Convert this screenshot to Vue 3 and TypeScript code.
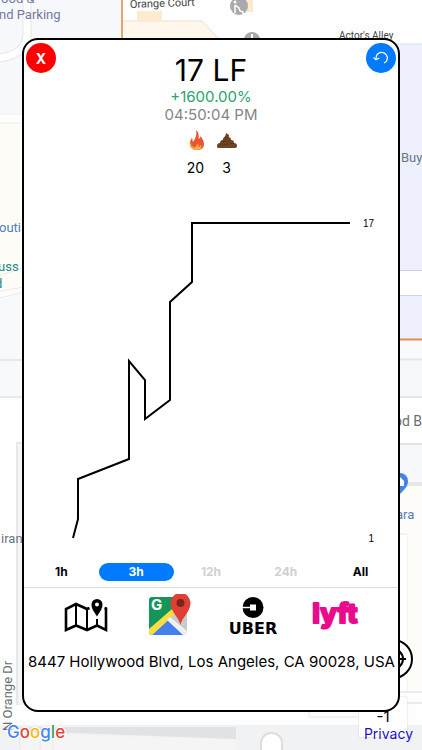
<script setup lang="ts">
import { computed, ref } from 'vue'

interface Range {
  label: string
  enabled: boolean
}

const ranges: Range[] = [
  { label: '1h', enabled: true },
  { label: '3h', enabled: true },
  { label: '12h', enabled: false },
  { label: '24h', enabled: false },
  { label: 'All', enabled: true },
]
const selected = ref('3h')

const samples: [number, number][] = [
  [49, 347], [54, 328], [54, 288], [105, 268], [105, 170], [121, 189],
  [121, 228], [146, 209], [146, 111], [168, 91], [168, 32], [326, 32],
]
const line = computed(() => samples.map((p) => p.join(',')).join(' '))
</script>

<template>
  <div class="screen">
    <svg class="map" viewBox="0 0 422 750" preserveAspectRatio="xMidYMid slice" aria-hidden="true">
      <rect width="422" height="750" fill="#fefefe" />
      <rect width="122" height="113" fill="#f7f8fb" />
      <path d="M27 0V34Q27 54 0 58" fill="none" stroke="#e6e6e6" stroke-width="9" />
      <path d="M27 0V34Q27 54 0 58" fill="none" stroke="#fff" stroke-width="7" />
      <path d="M0 114H22M0 123H22" stroke="#eeede9" />
      <rect y="124" width="24" height="170" fill="#fefcf6" />
      <path d="M0 300L24 291V397H0Z" fill="#f7f9fc" />
      <path d="M0 275L24 268M0 291L24 287M0 298L24 292" stroke="#ecebe6" fill="none" />
      <path d="M0 360H24M0 397H24" stroke="#e8e9eb" stroke-width="2" />
      <path d="M17 705V443H24" stroke="#e8e8ea" stroke-width="2" fill="none" />
      <rect x="18" y="444" width="6" height="261" fill="#f4f5f6" />
      <path d="M122 21H202L220 40H122Z" fill="#fff7eb" stroke="#eee0d0" />
      <path d="M122 0V40" stroke="#e5a66c" stroke-width="2" />
      <rect x="137" y="11" width="25" height="10" fill="#fdebd0" />
      <rect x="240" y="0" width="13" height="12" fill="#fde9cf" />
      <circle cx="239" cy="6" r="9" fill="#aaa" />
      <path d="M235 13V5M235 5l4 3 1 3 3 1v2" fill="none" stroke="#fff" stroke-width="1.5" />
      <circle cx="235" cy="2" r="1.500" fill="#fff" />
      <circle cx="252" cy="40" r="8" fill="#aaa" />
      <path d="M252 34v5" stroke="#fff" stroke-width="2" />
      <rect x="396" y="44" width="26" height="296" fill="#eef0fe" />
      <path d="M396 44H422" stroke="#dadcf3" />
      <rect x="396" y="271" width="26" height="24" fill="#fff" />
      <path d="M396 270.500H422M396 295.500H422" stroke="#cfd2ef" />
      <path d="M396 339.500H422" stroke="#dc9051" stroke-width="2" />
      <rect x="396" y="341" width="26" height="18" fill="#fbfafa" />
      <rect x="396" y="359" width="26" height="38" fill="#f7f8fa" />
      <path d="M396 359.500H422M396 397H422M396 444H422" stroke="#e4e5e7" stroke-width="2" />
      <rect x="396" y="445" width="26" height="38" fill="#f7f8fb" />
      <path d="M396 484H422" stroke="#e8e6e4" stroke-width="4" />
      <rect x="396" y="486" width="26" height="205" fill="#fefcf8" />
      <path d="M396 534H407V692" fill="none" stroke="#e9e8e6" />
      <rect x="396" y="535" width="11" height="156" fill="#fff" />
      <path d="M400 494C395 489 392 486 392 481a8 8 0 0 1 16 0c0 5-3 8-8 13Z" fill="#4285e8" />
      <path d="M395 486V481L400 477L404 481V486Z" fill="#fff" />
      <path d="M396 692H422M396 703H422" stroke="#ececf0" stroke-width="2" />
      <rect y="725" width="422" height="25" fill="#f1f2f3" />
      <path d="M20 727H236V739L20 731Z" fill="#e1e2e4" />
      <path d="M20 733L236 740V750H20Z" fill="#f5f5f5" />
      <path d="M20 725V750M40 741V750M53 741V750" stroke="#e8e8e8" />
      <path d="M309 712V717H360" fill="none" stroke="#eee5d9" />
      <rect x="261" y="733" width="21" height="26" rx="10" fill="#fff" stroke="#ddd" stroke-width="2" />
      <g class="places">
        <g fill="#7378a4" font-size="13">
          <text x="-6" y="3">Food &amp;</text>
          <text x="-1" y="19">nd Parking</text>
        </g>
        <text x="130" y="8" fill="#444" font-size="11" transform="rotate(-2 130 8)">Orange Court</text>
        <text x="339" y="39" fill="#444" font-size="10">Actor's Alley</text>
        <text x="401" y="162" fill="#687785" font-size="13">Buy</text>
        <text x="-1" y="232" fill="#527cba" font-size="13">outi</text>
        <text x="-2" y="271" fill="#258785" font-size="13">uss</text>
        <text x="-5" y="288" fill="#258785" font-size="13">d</text>
        <text x="1" y="543" fill="#687785" font-size="13">iran</text>
        <text x="394" y="426" fill="#687075" font-size="14">od B</text>
        <text x="396" y="519" fill="#527cba" font-size="13">ara</text>
        <text x="12" y="731" fill="#687075" font-size="13" transform="rotate(-90 12 731)">N Orange Dr</text>
      </g>
    </svg>

    <div class="attribution" aria-label="Google">
      <span class="blue">G</span><span class="red">o</span><span class="yellow">o</span><span class="blue">g</span><span class="green">l</span><span class="red">e</span>
    </div>
    <button class="locate" aria-label="Centre the map">
      <svg viewBox="0 0 40 40" fill="none" stroke="#000" stroke-width="2">
        <circle cx="20" cy="20" r="19" /><circle cx="20" cy="20" r="10" />
        <path d="M20 7V17M20 23V33M7 20H17M23 20H33" />
      </svg>
    </button>
    <div class="level">-1</div>
    <a class="privacy" href="#privacy">Privacy</a>

    <main class="card">
      <header class="head">
        <button class="round close" aria-label="Close">X</button>
        <div class="summary">
          <h1>17 LF</h1>
          <p class="gain">+1600.00%</p>
          <p class="time">04:50:04 PM</p>
        </div>
        <button class="round undo" aria-label="Undo">
          <svg viewBox="0 0 16 16" width="16" height="16" fill="none" stroke="#fff" stroke-width="1.2">
            <path d="M3 9C3 1.500 10 1 13 4.500c2.500 3 1.500 7-2 8.500" />
            <path d="M.5 7.500L3 9.800L6.300 8" />
          </svg>
        </button>
      </header>

      <section class="votes">
        <div class="vote">
          <svg viewBox="0 0 20 20" role="img" aria-label="Hot">
            <path d="M10 0C14 3 12 6 13 9l2-3c0 2 3 4 3 8 0 4-3 6-7 6-5 0-8-3-7-8 .5-2 1-3 2-4l1 4C10 8 11 4 10 0Z" fill="#e95730" />
            <path d="M4 11c-1 5 2 9 7 9 3 0 5-2 4-5l-2 2c-1-1 0-2-1-4 0 2-3 3-3 5-3-1-4-3-5-7Z" fill="#fbae48" />
          </svg>
          <span>20</span>
        </div>
        <div class="vote">
          <svg viewBox="0 0 20 20" role="img" aria-label="Not">
            <path d="M9 3c1 1 3 1 3 3l-1 1c2 0 3 1 3 3 2 0 3 1 3 3 2 0 3 1 3 3 0 1-1 2-2 2H2c-2 0-2-1-2-2 0-2 1-3 3-3 0-2 1-3 3-3-1-2 3-3 3-7Z" fill="#704322" />
            <path d="M8 8c2 0 4-1 4-2M5 11c4 1 7 0 9-1M3 14c5 1 10 0 14-1" fill="none" stroke="#4c2a14" stroke-width=".6" />
          </svg>
          <span>3</span>
        </div>
      </section>

      <svg class="chart" viewBox="0 0 374 360" role="img" aria-label="Count over the last three hours">
        <polyline :points="line" fill="none" stroke="#000" stroke-width="2" />
        <text x="350" y="36" text-anchor="end">17</text>
        <text x="350" y="351" text-anchor="end">1</text>
      </svg>

      <nav class="ranges" aria-label="Time range">
        <button
          v-for="r in ranges"
          :key="r.label"
          :class="{ active: r.label === selected }"
          :disabled="!r.enabled"
          @click="selected = r.label"
        >{{ r.label }}</button>
      </nav>

      <footer class="foot">
        <nav class="links" aria-label="Directions">
          <a href="#map" aria-label="Map">
            <svg viewBox="0 0 44 36" width="44" height="36">
              <path d="M25.500 10L23 11L12 6L2 11V32L12 27.500L23 32L33 27.500L42 32V10.500L40.500 10" fill="none" stroke="#000" stroke-width="2.600" />
              <path d="M12 6V28M23 11V32M33 21V28" stroke="#000" stroke-width="2" />
              <path fill-rule="evenodd" d="M33 18.500C29.500 13 27.500 10.500 27.500 6.500a5.500 5.500 0 0 1 11 0C38.500 10.500 36.500 13 33 18.500ZM33 4.500a2 2 0 1 0 0 4 2 2 0 0 0 0-4Z" />
            </svg>
          </a>
          <a href="#google-maps" aria-label="Google Maps">
            <svg viewBox="-1 2 44 44" width="44" height="44">
              <rect x="1" y="5" width="38" height="38" rx="3" fill="#16955a" />
              <path d="M22 20L39 10V40q0 3-3 3H4Z" fill="#c9cacc" />
              <path d="M4 43L20 28L36 43Z" fill="#4380ed" />
              <path d="M1 37L24 17L28 21L4 43Q1 43 1 40Z" fill="#fddc45" />
              <path d="M19 28L22 25L39 39V43H35Z" fill="#eff0f3" />
              <text x="3" y="18" fill="#fff" class="maps-g">G</text>
              <path d="M32.500 33C31 25 22.500 20 22.500 11a10 10 0 0 1 20 0C42.500 20 34 25 32.500 33Z" fill="#df4036" />
              <circle cx="32.500" cy="11" r="4" fill="#7e211b" />
            </svg>
          </a>
          <a href="#uber" aria-label="Uber">
            <svg viewBox="0 0 54 40" width="54" height="40">
              <circle cx="27" cy="11.500" r="10.500" />
              <path d="M16 11.500H26" stroke="#fff" stroke-width="1.500" />
              <rect x="24" y="8.500" width="6" height="6" fill="#fff" />
              <text x="27" y="38" text-anchor="middle" class="uber">UBER</text>
            </svg>
          </a>
          <a href="#lyft" aria-label="Lyft">
            <svg viewBox="0 0 50 40" width="50" height="40">
              <text x="24" y="27" text-anchor="middle" class="lyft">lyft</text>
            </svg>
          </a>
        </nav>
        <address>8447 Hollywood Blvd, Los Angeles, CA 90028, USA</address>
      </footer>
    </main>
  </div>
</template>

<style>
body {
  margin: 0;
}
</style>

<style scoped>
.screen {
  position: relative;
  box-sizing: border-box;
  display: flex;
  min-height: 100vh;
  padding: 38px 22px;
  overflow: hidden;
  font-family: Inter, "Liberation Sans", sans-serif;
  color: #000;
}
button {
  border: 0;
  padding: 0;
  font: inherit;
  cursor: pointer;
}
.map {
  position: absolute;
  inset: 0;
  width: 100%;
  height: 100%;
}
.places {
  font-family: Roboto, sans-serif;
}
.attribution {
  position: absolute;
  left: 7px;
  bottom: 6px;
  font-size: 17px;
  line-height: 24px;
  font-weight: 500;
  -webkit-text-stroke: 2px #fff;
  paint-order: stroke fill;
}
.blue { color: #4285f4; }
.red { color: #ea4335; }
.yellow { color: #fbbc05; }
.green { color: #34a853; }
.locate {
  position: absolute;
  right: 9px;
  bottom: 71px;
  width: 40px;
  height: 40px;
  border-radius: 50%;
  background: #fff;
}
.locate svg {
  display: block;
}
.level {
  position: absolute;
  right: 15px;
  bottom: 13px;
  width: 48px;
  height: 40px;
  border-radius: 2px;
  background: #fff;
  box-shadow: 0 0 2px #ccc;
  font-size: 15px;
  line-height: 40px;
  text-align: center;
}
.privacy {
  position: absolute;
  right: 9px;
  bottom: 6px;
  font-size: 14px;
  line-height: 20px;
  color: #1a10d0;
  text-decoration: none;
}
.card {
  position: relative;
  flex: 1;
  min-width: 0;
  display: flex;
  flex-direction: column;
  border: 2px solid #000;
  border-radius: 16px;
  background: #fff;
}
.head {
  display: grid;
  grid-template-columns: 30px 1fr 30px;
  padding: 3px 2px 0;
}
.round {
  display: grid;
  place-items: center;
  width: 30px;
  height: 30px;
  border-radius: 50%;
  color: #fff;
}
.close {
  background: #f00;
  font-size: 14px;
  font-weight: 700;
}
.undo {
  background: #007aff;
}
.summary {
  padding-top: 9px;
  text-align: center;
}
h1,
p {
  margin: 0;
  font-weight: 400;
}
h1 {
  font-size: 30px;
  line-height: 36px;
}
p {
  font-size: 15px;
  line-height: 18px;
}
.gain {
  color: #27a56b;
}
.time {
  color: #858585;
}
.votes {
  display: flex;
  justify-content: center;
  gap: 10px;
  padding-top: 6px;
}
.vote {
  display: flex;
  flex-direction: column;
  align-items: center;
  gap: 8px;
  width: 21px;
  font-size: 14px;
  line-height: 20px;
}
.vote svg {
  width: 20px;
  height: 20px;
}
.chart {
  display: block;
  width: 100%;
  margin: auto 0;
}
.chart text {
  font-family: "Liberation Sans", sans-serif;
  font-size: 10px;
}
.ranges {
  display: grid;
  grid-template-columns: repeat(5, 1fr);
  padding: 0 0 6px;
}
.ranges button {
  height: 18px;
  border-radius: 9px;
  background: none;
  color: #000;
  font-size: 12px;
  line-height: 18px;
  font-weight: 700;
}
.ranges button:disabled {
  color: #d0d0d0;
}
.ranges button.active {
  background: #007aff;
  color: #fff;
}
.foot {
  border-top: 1px solid #ddd;
  padding: 0 4px 38px;
}
.links {
  display: grid;
  grid-template-columns: repeat(4, 1fr);
  padding: 0 16px;
  height: 56px;
}
.links a {
  display: grid;
  place-items: center;
  color: #000;
}
.maps-g {
  font-size: 15px;
  font-weight: 700;
}
.uber {
  font-family: "DejaVu Sans", sans-serif;
  font-size: 16px;
  font-weight: 700;
}
.lyft {
  font-size: 27px;
  font-weight: 800;
  fill: #ea0b8c;
  stroke: #ea0b8c;
  stroke-width: 2px;
  stroke-linejoin: round;
}
address {
  padding-top: 8px;
  font-size: 15px;
  line-height: 20px;
  font-style: normal;
  text-align: center;
  white-space: nowrap;
}
</style>
